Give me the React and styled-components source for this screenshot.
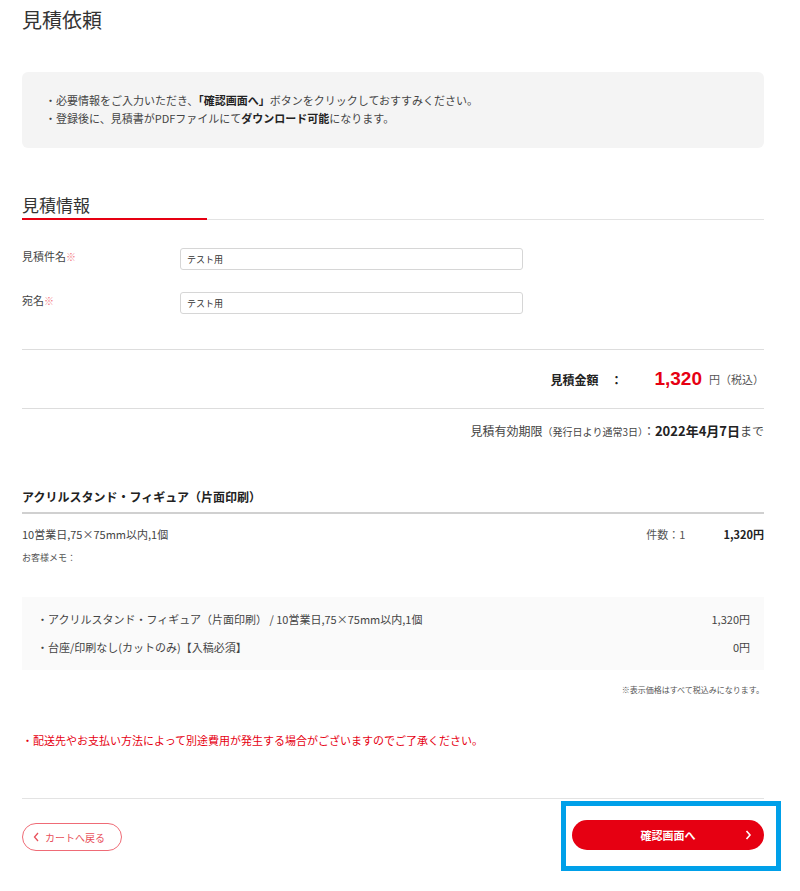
import React from "react";
import styled, { createGlobalStyle } from "styled-components";

const Global = createGlobalStyle`
  html, body { margin: 0; padding: 0; background: #fff; }
  body {
    font-family: "Noto Sans CJK JP", "Noto Sans", sans-serif;
    color: #333;
    font-size: 12px;
  }
  * { box-sizing: border-box; }
`;

const Page = styled.div`
  width: 742px;
  margin-left: 22px;
  padding-bottom: 40px;
`;

const Title = styled.h1`
  margin: 0;
  padding-top: 6px;
  font-size: 20px;
  line-height: 28px;
  font-weight: 400;
  color: #333;
`;

const InfoBox = styled.div`
  margin-top: 38px;
  background: #f4f4f4;
  border-radius: 6px;
  padding: 19px 22px 21px 23px;
`;

const InfoLine = styled.p`
  margin: 0;
  font-size: 11px;
  line-height: 18px;
  height: 18px;
  color: #444;
  b { font-weight: 700; color: #222; }
`;

const SectionHead = styled.div`
  margin-top: 45px;
  border-bottom: 1px solid #e3e3e3;
`;

const SectionTitle = styled.h2`
  margin: 0 0 -1px;
  width: 185px;
  font-size: 17px;
  line-height: 24px;
  font-weight: 400;
  padding-bottom: 1px;
  border-bottom: 2px solid #e60012;
`;

const Form = styled.div`
  margin-top: 28px;
  display: flex;
  flex-direction: column;
  gap: 22px;
  padding-bottom: 35px;
  border-bottom: 1px solid #ddd;
`;

const FormRow = styled.div`
  display: flex;
  align-items: flex-start;
`;

const Label = styled.label`
  width: 158px;
  font-size: 11px;
  line-height: 16px;
  color: #444;
  span { color: #f37b85; font-size: 10px; }
`;

const Input = styled.input`
  width: 343px;
  height: 22px;
  border: 1px solid #d6d6d6;
  border-radius: 3px;
  padding: 0 6px;
  font-family: inherit;
  font-size: 9px;
  color: #333;
  outline: none;
`;

const TotalRow = styled.div`
  height: 59px;
  border-bottom: 1px solid #ddd;
  display: flex;
  align-items: center;
  justify-content: flex-end;
`;

const TotalLabel = styled.span`
  font-size: 12px;
  font-weight: 700;
  color: #222;
  margin-right: 32px;
`;

const TotalAmount = styled.span`
  font-family: "Liberation Sans", Arial, sans-serif;
  font-size: 19px;
  font-weight: 700;
  color: #e60012;
  margin-right: 7px;
`;

const TotalUnit = styled.span`
  font-size: 11px;
  color: #555;
`;

const Validity = styled.div`
  margin-top: 13px;
  height: 18px;
  text-align: right;
  font-size: 12px;
  line-height: 18px;
  color: #444;
  small { font-size: 10px; }
  b { font-size: 13px; font-weight: 700; color: #222; }
`;

const ProductHead = styled.h3`
  margin: 48px 0 0;
  font-size: 12px;
  line-height: 18px;
  font-weight: 700;
  color: #222;
  padding-bottom: 6px;
  border-bottom: 2px solid #d0d0d0;
`;

const ItemRow = styled.div`
  margin-top: 11px;
  display: flex;
  align-items: center;
  font-size: 11px;
  line-height: 18px;
  color: #444;
`;

const ItemName = styled.span`
  flex: 1;
`;

const ItemCount = styled.span`
  color: #555;
`;

const ItemPrice = styled.span`
  margin-left: 38px;
  font-weight: 700;
  color: #222;
`;

const Memo = styled.div`
  margin-top: 7px;
  font-size: 9px;
  line-height: 16px;
  color: #555;
`;

const Breakdown = styled.div`
  margin-top: 31px;
  background: #fafafa;
  padding: 13px 14px 14px 15px;
  display: flex;
  flex-direction: column;
  gap: 10px;
`;

const BreakRow = styled.div`
  display: flex;
  justify-content: space-between;
  font-size: 11px;
  line-height: 18px;
  color: #444;
`;

const TaxNote = styled.div`
  margin-top: 13px;
  text-align: right;
  font-size: 8px;
  line-height: 14px;
  color: #555;
`;

const Warning = styled.p`
  margin: 34px 0 0;
  font-size: 11px;
  line-height: 18px;
  color: #e60012;
`;

const Footer = styled.div`
  margin-top: 49px;
  border-top: 1px solid #e3e3e3;
  padding-top: 21px;
  display: flex;
  justify-content: space-between;
  align-items: flex-start;
`;

const BackButton = styled.button`
  margin-top: 3px;
  width: 100px;
  height: 28px;
  border: 1px solid #ef6b76;
  border-radius: 14px;
  background: #fff;
  color: #e8505b;
  font-family: inherit;
  font-size: 10px;
  display: flex;
  align-items: center;
  gap: 5px;
  padding: 0 0 0 10px;
  cursor: pointer;
`;

const ConfirmWrap = styled.div`
  position: relative;
`;

const ConfirmButton = styled.button`
  width: 192px;
  height: 30px;
  border: none;
  border-radius: 15px;
  background: #e60012;
  color: #fff;
  font-family: inherit;
  font-size: 11px;
  font-weight: 700;
  display: flex;
  align-items: center;
  justify-content: center;
  position: relative;
  cursor: pointer;
`;

const ChevronRight = styled.svg`
  position: absolute;
  right: 12px;
  top: 10px;
`;

const Highlight = styled.div`
  position: absolute;
  left: -11px;
  top: -19px;
  width: 220px;
  height: 70px;
  border: 5px solid #00a0e9;
  pointer-events: none;
`;

export default function App() {
  return (
    <>
      <Global />
      <Page>
        <Title>見積依頼</Title>
        <InfoBox>
          <InfoLine>・必要情報をご入力いただき、<b>「確認画面へ」</b>ボタンをクリックしておすすみください。</InfoLine>
          <InfoLine>・登録後に、見積書がPDFファイルにて<b>ダウンロード可能</b>になります。</InfoLine>
        </InfoBox>

        <SectionHead>
          <SectionTitle>見積情報</SectionTitle>
        </SectionHead>

        <Form>
          <FormRow>
            <Label>見積件名<span>※</span></Label>
            <Input defaultValue="テスト用" />
          </FormRow>
          <FormRow>
            <Label>宛名<span>※</span></Label>
            <Input defaultValue="テスト用" />
          </FormRow>
        </Form>

        <TotalRow>
          <TotalLabel>見積金額　：</TotalLabel>
          <TotalAmount>1,320</TotalAmount>
          <TotalUnit>円（税込）</TotalUnit>
        </TotalRow>

        <Validity>
          見積有効期限<small>（発行日より通常3日）</small>：<b>2022年4月7日</b>まで
        </Validity>

        <ProductHead>アクリルスタンド・フィギュア（片面印刷）</ProductHead>
        <ItemRow>
          <ItemName>10営業日,75×75mm以内,1個</ItemName>
          <ItemCount>件数：1</ItemCount>
          <ItemPrice>1,320円</ItemPrice>
        </ItemRow>
        <Memo>お客様メモ：</Memo>

        <Breakdown>
          <BreakRow>
            <span>・アクリルスタンド・フィギュア（片面印刷） / 10営業日,75×75mm以内,1個</span>
            <span>1,320円</span>
          </BreakRow>
          <BreakRow>
            <span>・台座/印刷なし(カットのみ)【入稿必須】</span>
            <span>0円</span>
          </BreakRow>
        </Breakdown>

        <TaxNote>※表示価格はすべて税込みになります。</TaxNote>

        <Warning>・配送先やお支払い方法によって別途費用が発生する場合がございますのでご了承ください。</Warning>

        <Footer>
          <BackButton>
            <svg width="7" height="10" viewBox="0 0 7 10">
              <polyline points="5,1 1.5,5 5,9" fill="none" stroke="#e8505b" strokeWidth="1.3" />
            </svg>
            カートへ戻る
          </BackButton>
          <ConfirmWrap>
            <ConfirmButton>
              確認画面へ
              <ChevronRight width="7" height="10" viewBox="0 0 7 10">
                <polyline points="1.5,1 5,5 1.5,9" fill="none" stroke="#fff" strokeWidth="1.6" />
              </ChevronRight>
            </ConfirmButton>
            <Highlight />
          </ConfirmWrap>
        </Footer>
      </Page>
    </>
  );
}
